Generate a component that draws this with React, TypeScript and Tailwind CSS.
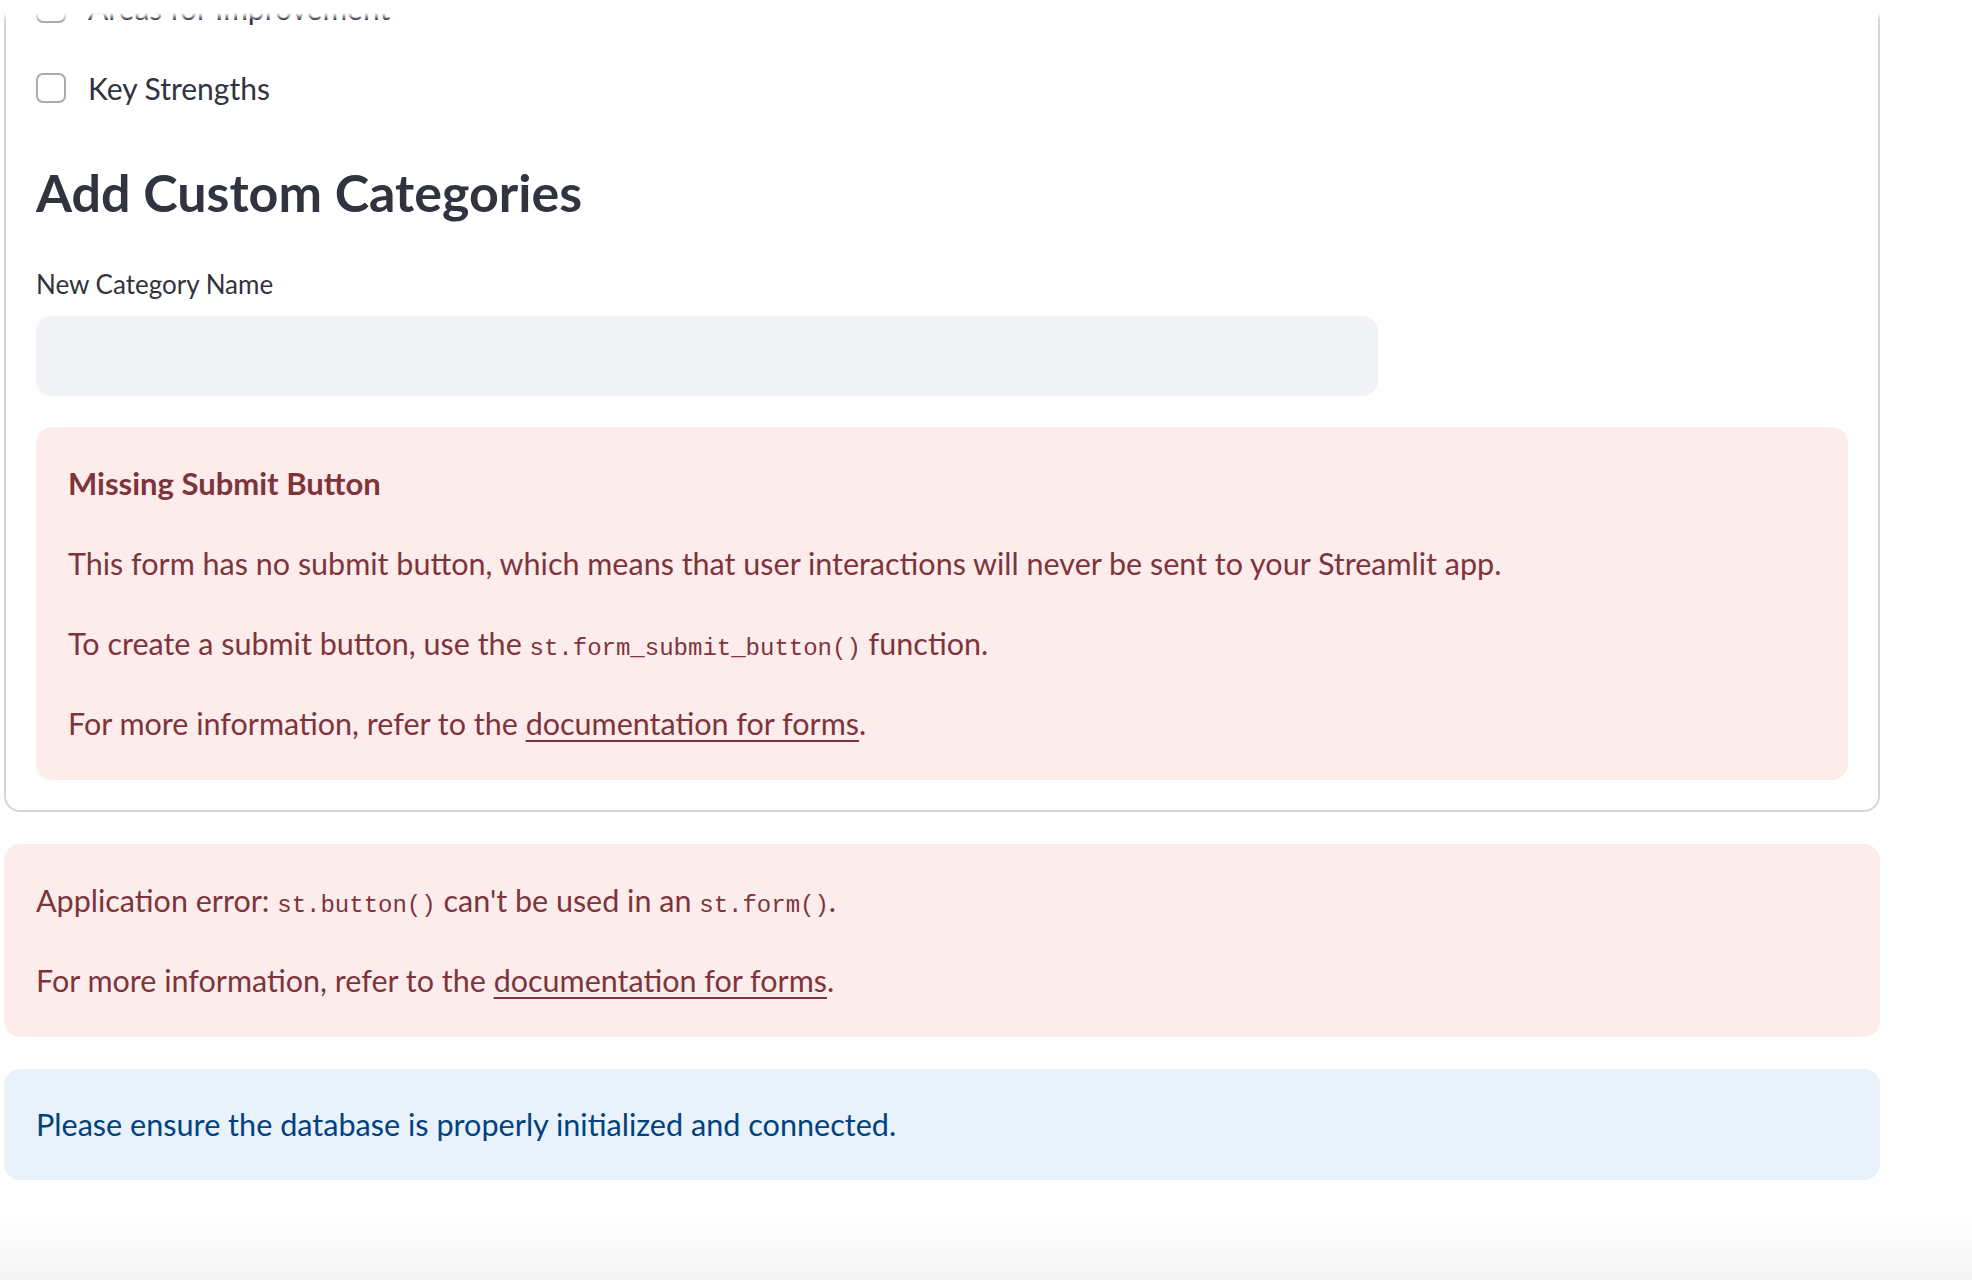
const errorText = "text-[#7d353b]"

function Checkbox({ label }: { label: string }) {
  return (
    <label className="flex h-[30px] items-center gap-[22px]">
      <span className="h-[30px] w-[30px] shrink-0 rounded-[7px] border-2 border-[#a9abb3] bg-white" />
      <span className="text-[30px] leading-[40px] text-[#31333f]">{label}</span>
    </label>
  )
}

function Code({ children }: { children: string }) {
  return <code className="font-['Liberation_Mono',monospace] text-[24px] leading-none">{children}</code>
}

function DocsLink() {
  return (
    <a href="#" className="underline decoration-2 underline-offset-[5px]">
      documentation for forms
    </a>
  )
}

export default function App() {
  return (
    <div className="relative h-[1280px] w-full overflow-hidden bg-white font-['Lato',sans-serif] text-[#31333f]">
      <div className="ml-[4px] mt-[-9px] flex w-[1876px] flex-col gap-[32px]">
        {/* form container, top edge scrolled out of view */}
        <div className="rounded-[16px] border-2 border-[#d6d6d9] px-[30px] pb-[30px]">
          <div className="flex flex-col gap-[50px]">
            <Checkbox label="Areas for Improvement" />
            <Checkbox label="Key Strengths" />
          </div>
          <h3 className="mt-[55px] h-[68px] text-[52px] font-bold leading-[68px] text-[#31333f]">
            Add Custom Categories
          </h3>
          <p className="mt-[38px] text-[26px] leading-[40px]">New Category Name</p>
          <div className="mt-[12px] h-[80px] w-[1342px] rounded-[16px] bg-[#f0f2f6]" />
          <div className={`mt-[31px] flex flex-col gap-[29px] rounded-[16px] bg-[#fdecec] px-[32px] py-[31px] text-[30.5px] leading-[51px] ${errorText}`}>
            <p className="text-[31px] font-bold">Missing Submit Button</p>
            <p>This form has no submit button, which means that user interactions will never be sent to your Streamlit app.</p>
            <p>
              To create a submit button, use the <Code>st.form_submit_button()</Code> function.
            </p>
            <p>
              For more information, refer to the <DocsLink />.
            </p>
          </div>
        </div>

        <div className={`flex flex-col gap-[29px] rounded-[16px] bg-[#fdecec] px-[32px] py-[31px] text-[30.5px] leading-[51px] ${errorText}`}>
          <p>
            Application error: <Code>st.button()</Code> can't be used in an <Code>st.form()</Code>.
          </p>
          <p>
            For more information, refer to the <DocsLink />.
          </p>
        </div>

        <div className="rounded-[16px] bg-[#e9f1fb] px-[32px] py-[30px] text-[30.6px] leading-[51px] text-[#004280]">
          <p>Please ensure the database is properly initialized and connected.</p>
        </div>
      </div>

      {/* fades at the top and bottom of the viewport */}
      <div className="pointer-events-none absolute inset-x-0 top-0 h-[20px] bg-gradient-to-b from-white from-65% to-white/0" />
      <div className="pointer-events-none absolute inset-x-0 bottom-0 h-[70px] bg-gradient-to-b from-white/0 to-[#f4f4f4]" />
    </div>
  )
}
